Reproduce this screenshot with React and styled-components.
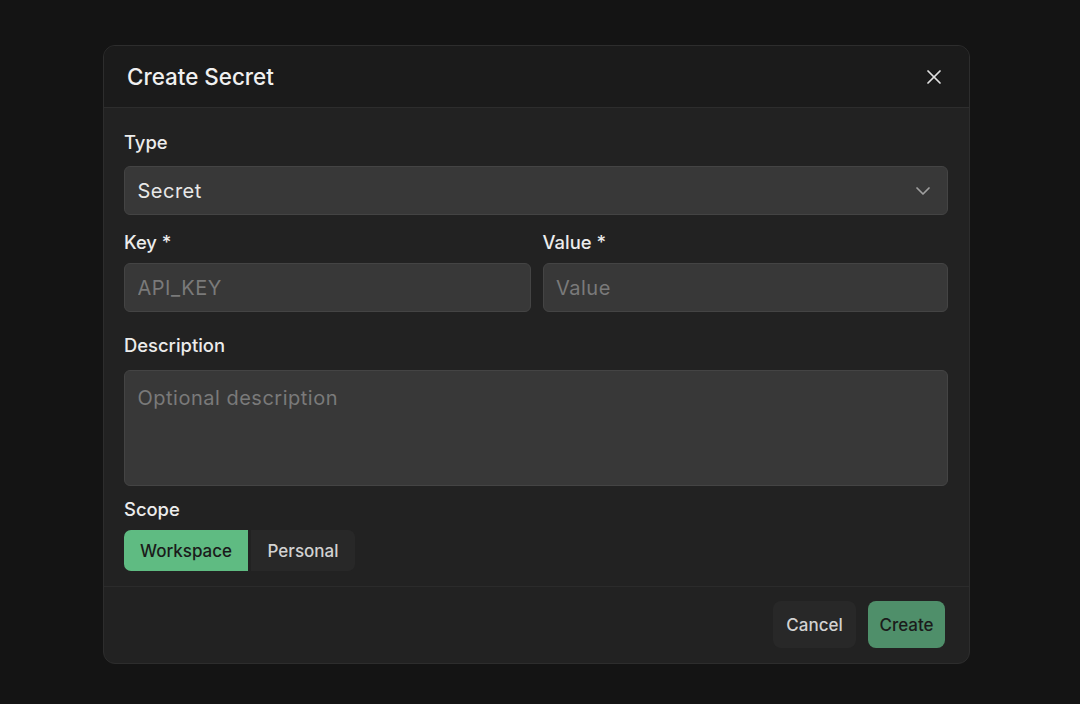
import React from "react";
import styled, { createGlobalStyle } from "styled-components";
import { X, ChevronDown } from "lucide-react";

const GlobalStyle = createGlobalStyle`
  html, body { margin: 0; padding: 0; background: #141414; }
  * { box-sizing: border-box; }
`;

const Page = styled.div`
  width: 1080px;
  height: 704px;
  padding: 45px 110px 0 103px;
  background: #141414;
  font-family: Inter, "Liberation Sans", sans-serif;
  overflow: hidden;
`;

const Modal = styled.div`
  width: 867px;
  height: 619px;
  display: flex;
  flex-direction: column;
  background: #222222;
  border: 1px solid #2d2d2d;
  border-radius: 12px;
  overflow: hidden;
`;

const Header = styled.header`
  height: 62px;
  flex: none;
  display: flex;
  align-items: center;
  justify-content: space-between;
  padding: 0 23px 0 23px;
  background: #1b1b1b;
  border-bottom: 1px solid #2d2d2d;
`;

const Title = styled.h2`
  margin: 0;
  font-size: 22.4px;
  font-weight: 450;
  color: #f0f0f0;
`;

const CloseButton = styled.button`
  display: flex;
  padding: 0;
  background: none;
  border: 0;
  color: #e0e0e0;
`;

const Body = styled.div`
  flex: 1;
  display: flex;
  flex-direction: column;
  padding: 21px 21px 0 20px;
`;

const Label = styled.label`
  display: block;
  height: 26px;
  margin-bottom: ${(p) => p.$gap || 11}px;
  font-size: 18.4px;
  line-height: 26px;
  font-weight: 450;
  color: #ececec;
`;

const Select = styled.div`
  height: 49px;
  display: flex;
  align-items: center;
  justify-content: space-between;
  padding: 0 12px 0 12.5px;
  background: #383838;
  border: 1px solid #444;
  border-radius: 6px;
  font-size: 20px;
  letter-spacing: 0.5px;
  color: #e8e8e8;
  svg { color: #a0a0a0; }
`;

const Row = styled.div`
  display: grid;
  grid-template-columns: 406.5px 405.5px;
  gap: 12px;
  margin-top: 14px;
`;

const Input = styled.input`
  display: block;
  width: 100%;
  height: 49px;
  padding: 0 12.5px;
  background: #383838;
  border: 1px solid #444;
  border-radius: 6px;
  outline: none;
  font-family: inherit;
  font-size: 20px;
  letter-spacing: 0.5px;
  color: #e8e8e8;
  &::placeholder { color: #7a7a7a; opacity: 1; }
`;

const TextArea = styled.textarea`
  display: block;
  width: 100%;
  height: 116px;
  padding: 14px 12.5px;
  background: #383838;
  border: 1px solid #444;
  border-radius: 6px;
  outline: none;
  resize: none;
  font-family: inherit;
  font-size: 20px;
  line-height: 26px;
  letter-spacing: 0.5px;
  color: #e8e8e8;
  &::placeholder { color: #7a7a7a; opacity: 1; }
`;

const Section = styled.div`
  margin-top: ${(p) => p.$top}px;
`;

const DescriptionLabel = styled(Label)`
  margin-bottom: 12px;
`;

const Toggle = styled.div`
  display: flex;
`;

const ToggleItem = styled.button`
  height: 41px;
  padding: 0;
  width: ${(p) => p.$width}px;
  margin-left: ${(p) => (p.$active ? 0 : 3)}px;
  border: 0;
  border-radius: ${(p) => (p.$active ? "7px 0 0 7px" : "0 7px 7px 0")};
  background: ${(p) => (p.$active ? "#5fbb82" : "#282828")};
  color: ${(p) => (p.$active ? "#1b1b1b" : "#d2d2d2")};
  font-family: inherit;
  font-size: 17px;
  font-weight: 450;
`;

const Footer = styled.footer`
  height: 77px;
  flex: none;
  display: flex;
  justify-content: flex-end;
  gap: 12px;
  padding: 14px 24px 0 0;
  border-top: 1px solid #2b2b2b;
`;

const Button = styled.button`
  height: 47px;
  width: ${(p) => p.$width}px;
  padding: 0;
  border: 0;
  border-radius: 8px;
  background: ${(p) => (p.$primary ? "#4f8f6a" : "#282828")};
  color: ${(p) => (p.$primary ? "#1b1b1b" : "#d2d2d2")};
  font-family: inherit;
  font-size: 17px;
  font-weight: 450;
`;

export default function App() {
  return (
    <>
      <GlobalStyle />
      <Page>
        <Modal>
          <Header>
            <Title>Create Secret</Title>
            <CloseButton>
              <X size={24} strokeWidth={1.75} />
            </CloseButton>
          </Header>
          <Body>
            <Label>Type</Label>
            <Select>
              Secret
              <ChevronDown size={24} strokeWidth={1.75} />
            </Select>
            <Row>
              <div>
                <Label $gap={8}>Key *</Label>
                <Input placeholder="API_KEY" />
              </div>
              <div>
                <Label $gap={8}>Value *</Label>
                <Input placeholder="Value" />
              </div>
            </Row>
            <Section $top={20}>
              <DescriptionLabel>Description</DescriptionLabel>
              <TextArea placeholder="Optional description" />
            </Section>
            <Section $top={10}>
              <Label $gap={8}>Scope</Label>
              <Toggle>
                <ToggleItem $active $width={124}>Workspace</ToggleItem>
                <ToggleItem $width={104}>Personal</ToggleItem>
              </Toggle>
            </Section>
          </Body>
          <Footer>
            <Button $width={83}>Cancel</Button>
            <Button $primary $width={77}>Create</Button>
          </Footer>
        </Modal>
      </Page>
    </>
  );
}
